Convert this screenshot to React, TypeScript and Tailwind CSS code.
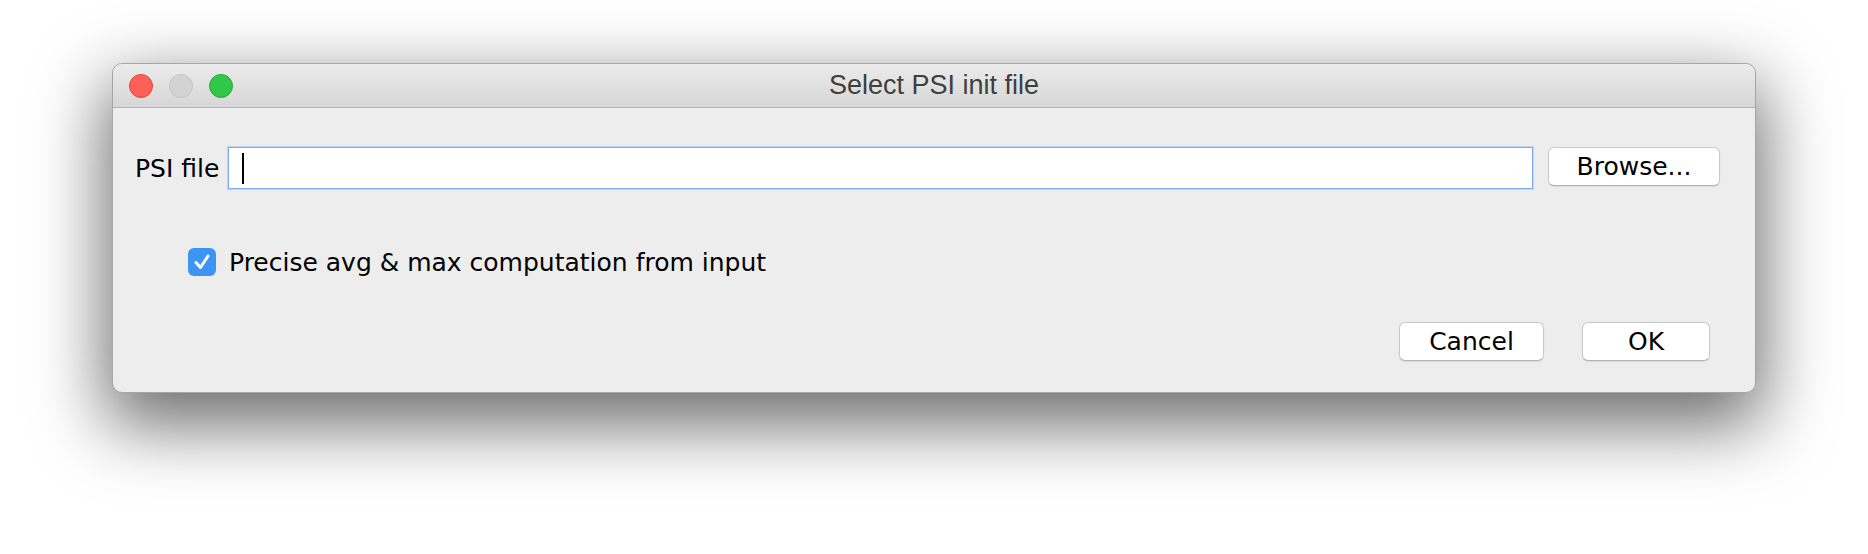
import React from "react";

const uiFont = { fontFamily: '"DejaVu Sans", "Liberation Sans", sans-serif' };

function TrafficLights() {
  return (
    <div className="flex items-center gap-[16px] pl-[16px]">
      <span className="block h-[24px] w-[24px] rounded-full border border-[#e0443e] bg-[#fe5f57]" />
      <span className="block h-[24px] w-[24px] rounded-full border border-[#c4c4c4] bg-[#d3d3d3]" />
      <span className="block h-[24px] w-[24px] rounded-full border border-[#27a93a] bg-[#31c84a]" />
    </div>
  );
}

function MacButton({ label, width }: { label: string; width: string }) {
  return (
    <button
      className={`${width} flex h-[39px] items-center justify-center rounded-[6px] border border-[#c9c9c9] border-b-[#b3b3b3] bg-white text-[25px] leading-none text-black shadow-[0_1px_1px_rgba(0,0,0,0.08)]`}
      style={uiFont}
    >
      {label}
    </button>
  );
}

function CheckIcon() {
  return (
    <svg width="22" height="22" viewBox="0 0 22 22" fill="none">
      <path d="M5 11.5 L9.5 16.5 L17 5" stroke="white" strokeWidth="3" strokeLinecap="round" strokeLinejoin="round" />
    </svg>
  );
}

export default function App() {
  return (
    <div className="h-[554px] w-[1868px] overflow-hidden bg-white pl-[112px] pt-[63px]">
      <div className="flex h-[330px] w-[1644px] flex-col rounded-[10px] border border-[#a6a6a6] bg-[#ededed] shadow-[0_26px_70px_6px_rgba(0,0,0,0.58)]">
        {/* title bar */}
        <div className="grid h-[44px] grid-cols-[1fr_auto_1fr] items-center rounded-t-[10px] border-b border-[#b4b4b4] bg-gradient-to-b from-[#ececec] to-[#d6d6d6]">
          <TrafficLights />
          <div className="text-[27px] leading-none text-[#3f3f3f]" style={{ fontFamily: '"Liberation Sans", Arial, sans-serif' }}>
            Select PSI init file
          </div>
          <div />
        </div>

        {/* body */}
        <div className="flex flex-1 flex-col" style={uiFont}>
          <div className="flex items-center pl-[22px] pr-[35px] pt-[39px]">
            <span className="text-[25px] leading-none text-black">PSI file</span>
            <div className="ml-[9px] flex h-[42px] flex-1 items-center border border-[#7eaaf0] bg-white pl-[13px] shadow-[0_0_0_1px_rgba(126,170,240,0.35)]">
              <span className="block h-[31px] w-[2px] bg-black" />
            </div>
            <div className="ml-[15px] self-start">
              <MacButton label="Browse..." width="w-[172px]" />
            </div>
          </div>

          <div className="flex items-center pl-[75px] pt-[59px]">
            <span className="flex h-[28px] w-[28px] items-center justify-center rounded-[6px] bg-[#3b95f7]">
              <CheckIcon />
            </span>
            <span className="ml-[13px] text-[25px] leading-none text-black">Precise avg &amp; max computation from input</span>
          </div>

          <div className="flex justify-end gap-[38px] pr-[45px] pt-[46px]">
            <MacButton label="Cancel" width="w-[145px]" />
            <MacButton label="OK" width="w-[128px]" />
          </div>
        </div>
      </div>
    </div>
  );
}
